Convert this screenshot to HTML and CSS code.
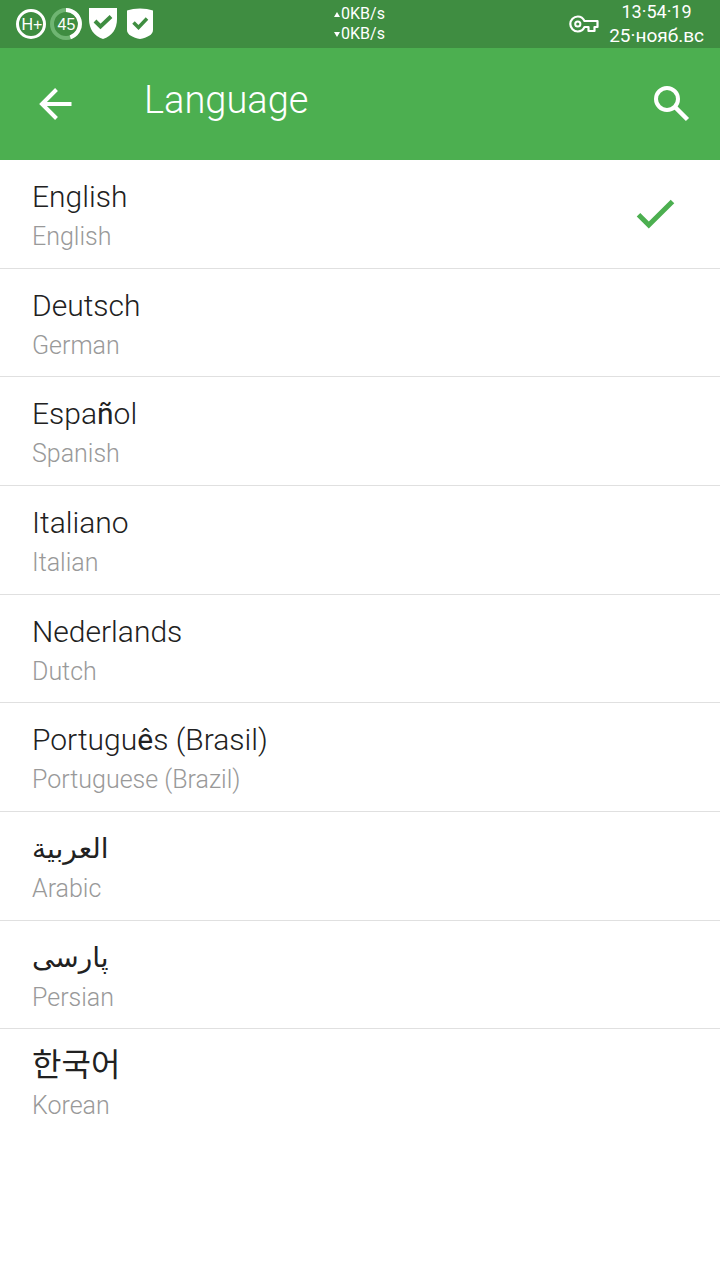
FILE: index.html
```html
<!DOCTYPE html>
<html lang="en">
<head>
<meta charset="utf-8">
<meta name="viewport" content="width=device-width, initial-scale=1">
<title>Language</title>
<link rel="stylesheet" href="styles.css">
</head>
<body>
<div class="status-bar">
  <div class="status-left">
    <svg class="status-icon" viewBox="0 0 32 32" aria-hidden="true">
      <circle cx="16" cy="16" r="13.5" fill="none" stroke="#fff" stroke-width="3"/>
      <text class="ring-text" x="17" y="21.5" text-anchor="middle">H+</text>
    </svg>
    <svg class="status-icon ring-gap" viewBox="0 0 32 32" aria-hidden="true">
      <circle cx="16" cy="16" r="14" fill="none" stroke="#6fb572" stroke-width="4"/>
      <path d="M16 2A14 14 0 0 1 20.3 29.3" fill="none" stroke="#fff" stroke-width="4"/>
      <text class="ring-text" x="16.5" y="21.5" text-anchor="middle">45</text>
    </svg>
    <svg class="status-icon" viewBox="0 0 32 32" aria-hidden="true">
      <path d="M2 0H30V11C30 21 25 28 16 31C7 28 2 21 2 11Z" fill="#fff"/>
      <path d="M8 13L13.5 18.5L24 8.5" fill="none" stroke="#3f8d41" stroke-width="4"/>
    </svg>
    <svg class="status-icon" viewBox="0 0 32 32" aria-hidden="true">
      <path d="M16 0.5C21 0.5 25 1.2 29 2.5V22C29 27 23 29.5 16 31C9 29.5 3 27 3 22V2.5C7 1.2 11 0.5 16 0.5Z" fill="#fff"/>
      <path d="M9.5 14.5L14.5 19.5L23 10.5" fill="none" stroke="#3f8d41" stroke-width="3.5"/>
    </svg>
  </div>
  <div class="net-speed"><span><i class="tri up"></i>0KB/s</span><span><i class="tri down"></i>0KB/s</span></div>
  <div class="status-right">
    <svg class="key-icon" viewBox="0 0 30 18" aria-hidden="true">
      <path d="M15.5 6C14.2 3.2 11.7 1.5 8.8 1.5A7.5 7.5 0 0 0 8.8 16.5C11.7 16.5 14.2 14.8 15.5 12H19.5V16H25.5V12H28.5V6Z" fill="none" stroke="#fff" stroke-width="2.2" stroke-linejoin="round"/>
      <circle cx="8.8" cy="9" r="2.6" fill="none" stroke="#fff" stroke-width="2"/>
    </svg>
    <div class="clock"><span class="time">13·54·19</span><span>25·нояб.вс</span></div>
  </div>
</div>
<header class="app-bar">
  <button class="icon-button" type="button" aria-label="Back">
    <svg viewBox="0 0 48 48" aria-hidden="true"><path d="M39.5 24H11M24.5 9.5L10 24L24.5 38.5" fill="none" stroke="#fff" stroke-width="4"/></svg>
  </button>
  <h1 class="title">Language</h1>
  <button class="icon-button" type="button" aria-label="Search">
    <svg viewBox="0 0 48 48" aria-hidden="true"><circle cx="19" cy="19" r="11" fill="none" stroke="#fff" stroke-width="4"/><path d="M27.5 27.5L39.5 39.5" fill="none" stroke="#fff" stroke-width="4.5"/></svg>
  </button>
</header>
<main>
<ul class="languages">
  <li><button class="language" type="button" aria-pressed="true"><span class="names"><span class="native">English</span><span class="local">English</span></span><svg class="check" viewBox="0 0 48 48" aria-hidden="true"><path d="M6.5 23.7L16.8 34L40.5 10.5" fill="none" stroke="#4caf50" stroke-width="5"/></svg></button></li>
  <li><button class="language" type="button"><span class="names"><span class="native">Deutsch</span><span class="local">German</span></span></button></li>
  <li><button class="language" type="button"><span class="names"><span class="native">Espa<span class="accent">ñ</span>ol</span><span class="local">Spanish</span></span></button></li>
  <li><button class="language" type="button"><span class="names"><span class="native">Italiano</span><span class="local">Italian</span></span></button></li>
  <li><button class="language" type="button"><span class="names"><span class="native">Nederlands</span><span class="local">Dutch</span></span></button></li>
  <li><button class="language" type="button"><span class="names"><span class="native">Portugu<span class="accent">ê</span>s (Brasil)</span><span class="local">Portuguese (Brazil)</span></span></button></li>
  <li><button class="language" type="button"><span class="names"><span class="native arabic" lang="ar">العربية</span><span class="local">Arabic</span></span></button></li>
  <li><button class="language" type="button"><span class="names"><span class="native arabic" lang="fa">پارسی</span><span class="local">Persian</span></span></button></li>
  <li><button class="language" type="button"><span class="names"><span class="native korean" lang="ko">한국어</span><span class="local">Korean</span></span></button></li>
</ul>
</main>
</body>
</html>
```
FILE: styles.css
```css
* { box-sizing: border-box; }
body { margin: 0; background: #fff; color: #212121; font-family: Roboto, "Noto Sans", sans-serif; font-weight: 340; }
button { border: 0; background: none; padding: 0; margin: 0; font: inherit; color: inherit; cursor: pointer; }
svg { display: block; flex: none; }

.status-bar { display: grid; grid-template-columns: 1fr auto 1fr; align-items: center; height: 48px; padding: 0 16px 0 15px; background: #3f8d41; color: #fff; font-weight: 400; }
.status-left { display: flex; align-items: center; gap: 5px; }
.status-icon { width: 32px; height: 32px; }
.ring-gap { margin-left: -2px; }
.ring-text { fill: #fff; font: 16px "Liberation Sans", sans-serif; }
.net-speed { display: flex; flex-direction: column; font-size: 16px; line-height: 20px; }
.net-speed span { display: flex; align-items: center; gap: 1px; }
.tri { border: 3px solid transparent; border-top-width: 0; border-bottom: 5px solid #fff; }
.tri.down { border-top: 5px solid #fff; border-bottom-width: 0; }
.status-right { display: flex; align-items: center; justify-content: flex-end; gap: 10px; }
.key-icon { width: 30px; height: 18px; }
.clock { display: flex; flex-direction: column; align-items: center; font-size: 19px; line-height: 24px; }
.time { font-size: 18px; }

.app-bar { display: flex; align-items: center; height: 112px; padding: 0 24px 0 32px; background: #4caf50; color: #fff; }
.icon-button { width: 48px; height: 48px; flex: none; }
.title { flex: 1; margin: 0; padding: 0 0 8px 64px; font-size: 38px; line-height: 48px; font-weight: 340; }

.languages { list-style: none; margin: 0; padding: 0; }
.languages li { border-bottom: 1px solid #e0e0e0; }
.languages li:last-child { border-bottom: 0; }
.language { display: flex; align-items: center; justify-content: space-between; width: 100%; padding: 17px 40px 15px 32px; text-align: left; }
.languages li:nth-child(3n + 2) .language { padding-bottom: 14px; }
.names { display: flex; flex-direction: column; align-items: flex-start; gap: 4px; }
.native { font-size: 30px; line-height: 40px; height: 40px; }
.local { font-size: 25px; line-height: 32px; color: #999; }
.accent { font-weight: 400; }
.arabic { font-family: "DejaVu Sans", sans-serif; font-size: 28px; font-weight: 400; }
.korean { font-family: "Noto Sans CJK KR", sans-serif; font-size: 32px; line-height: 32px; font-weight: 400; }
.check { width: 48px; height: 48px; }
```
